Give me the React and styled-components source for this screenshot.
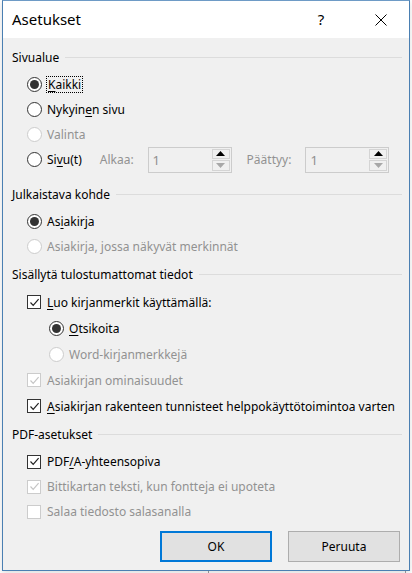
import styled, { createGlobalStyle } from "styled-components";

const GlobalStyle = createGlobalStyle`
  html, body {
    margin: 0;
    padding: 0;
    background: #ffffff;
  }
  body {
    font-family: "Noto Sans", "Open Sans", sans-serif;
    font-size: 12px;
    color: #000;
  }
`;

export default function App() {
  return (
    <>
      <GlobalStyle />
      <Page>
        <Dialog>
          <TitleBar>
            <Title>Asetukset</Title>
            <Help>?</Help>
            <Close>
              <svg width="12" height="12" viewBox="0 0 12 12">
                <path d="M0.5 0.5 L11.5 11.5 M11.5 0.5 L0.5 11.5" stroke="#000" strokeWidth="1" />
              </svg>
            </Close>
          </TitleBar>
          <Body>
            <Section>
              <Header>Sivualue</Header>
              <Row>
                <Radio checked />
                <Label focused>
                  <u>K</u>aikki
                </Label>
              </Row>
              <Row>
                <Radio />
                <Label>
                  Nykyin<u>e</u>n sivu
                </Label>
              </Row>
              <Row>
                <Radio disabled />
                <Label disabled>Valinta</Label>
              </Row>
              <Row>
                <Radio />
                <Label>
                  Si<u>v</u>u(t)
                </Label>
                <SpinGroup $offset={13}>
                  <Label disabled>Alkaa:</Label>
                  <Spin />
                </SpinGroup>
                <SpinGroup $offset={10}>
                  <Label disabled>Päättyy:</Label>
                  <Spin />
                </SpinGroup>
              </Row>
            </Section>

            <Section $top={12}>
              <Header>Julkaistava kohde</Header>
              <Row>
                <Radio checked />
                <Label>
                  As<u>i</u>akirja
                </Label>
              </Row>
              <Row>
                <Radio disabled />
                <Label disabled>Asiakirja, jossa näkyvät merkinnät</Label>
              </Row>
            </Section>

            <Section $top={5}>
              <Header>Sisällytä tulostumattomat tiedot</Header>
              <Row $h={26}>
                <Check checked />
                <Label>
                  <u>L</u>uo kirjanmerkit käyttämällä:
                </Label>
              </Row>
              <Row $h={26} $indent={22}>
                <Radio checked />
                <Label>
                  <u>O</u>tsikoita
                </Label>
              </Row>
              <Row $h={26} $indent={22}>
                <Radio disabled />
                <Label disabled>Word-kirjanmerkkejä</Label>
              </Row>
              <Row $h={26}>
                <Check checked disabled />
                <Label disabled>Asiakirjan ominaisuudet</Label>
              </Row>
              <Row $h={26}>
                <Check checked />
                <Label>
                  <u>A</u>siakirjan rakenteen tunnisteet helppokäyttötoimintoa varten
                </Label>
              </Row>
            </Section>

            <Section $top={5}>
              <Header>PDF-asetukset</Header>
              <Row>
                <Check checked />
                <Label>
                  PDF<u>/</u>A-yhteensopiva
                </Label>
              </Row>
              <Row>
                <Check checked disabled />
                <Label disabled>Bittikartan teksti, kun fontteja ei upoteta</Label>
              </Row>
              <Row>
                <Check disabled />
                <Label disabled>Salaa tiedosto salasanalla</Label>
              </Row>
            </Section>

            <Buttons>
              <Button $default>OK</Button>
              <Button>Peruuta</Button>
            </Buttons>
          </Body>
        </Dialog>
        <Behind>
          <BehindButton>Asetukset...</BehindButton>
        </Behind>
      </Page>
    </>
  );
}

function Radio({ checked, disabled }) {
  return (
    <RadioCircle $disabled={disabled}>
      {checked && <RadioDot />}
    </RadioCircle>
  );
}

function Check({ checked, disabled }) {
  return (
    <CheckBox $disabled={disabled}>
      {checked && (
        <svg width="11" height="11" viewBox="0 0 11 11">
          <path
            d="M1.5 5.5 L4.2 8.3 L9.6 2.2"
            fill="none"
            stroke={disabled ? "#c5c5c5" : "#222"}
            strokeWidth="1.2"
          />
        </svg>
      )}
    </CheckBox>
  );
}

function Spin() {
  return (
    <SpinBox>
      <SpinValue>1</SpinValue>
      <SpinButtons>
        <SpinBtn>
          <svg width="9" height="5" viewBox="0 0 9 5">
            <path d="M0 5 L4.5 0 L9 5 Z" fill="#000" />
          </svg>
        </SpinBtn>
        <SpinBtn>
          <svg width="9" height="5" viewBox="0 0 9 5">
            <path d="M0 0 L9 0 L4.5 5 Z" fill="#a8a8a8" />
          </svg>
        </SpinBtn>
      </SpinButtons>
    </SpinBox>
  );
}

const Page = styled.div`
  height: 573px;
  overflow: hidden;
  padding-left: 2px;
  box-sizing: border-box;
`;

const Dialog = styled.div`
  width: 408px;
  height: 571px;
  box-sizing: border-box;
  border: 1px solid #4a7fb2;
  border-top-color: #6e9bc6;
  background: #f0f0f0;
  display: flex;
  flex-direction: column;
  box-shadow: 0 2px 6px rgba(0, 0, 0, 0.15);
  position: relative;
  z-index: 1;
`;

const TitleBar = styled.div`
  height: 37px;
  background: #ffffff;
  display: flex;
  align-items: center;
  padding-left: 9px;
  flex-shrink: 0;
`;

const Title = styled.div`
  flex: 1;
  font-size: 15px;
  color: #000;
  padding-bottom: 1px;
`;

const Help = styled.div`
  width: 16px;
  font-size: 15px;
  margin-right: 46px;
  text-align: center;
  padding-bottom: 1px;
`;

const Close = styled.div`
  width: 12px;
  height: 12px;
  margin-right: 22px;
  display: flex;
`;

const Body = styled.div`
  flex: 1;
  display: flex;
  flex-direction: column;
  padding: 9px 7px 0 9px;
`;

const Section = styled.div`
  display: flex;
  flex-direction: column;
  margin-top: ${({ $top }) => $top || 0}px;
`;

const Header = styled.div`
  height: 20px;
  display: flex;
  align-items: center;
  gap: 6px;
  margin-bottom: 5px;
  white-space: nowrap;

  &::after {
    content: "";
    flex: 1;
    height: 1px;
    background: #dcdcdc;
    margin-top: 1px;
  }
`;

const Row = styled.div`
  height: ${({ $h }) => $h || 25}px;
  display: flex;
  align-items: center;
  padding-left: ${({ $indent }) => 15 + ($indent || 0)}px;
  white-space: nowrap;
`;

const Label = styled.span`
  margin-left: 5px;
  color: ${({ disabled }) => (disabled ? "#929292" : "#000")};
  outline: ${({ focused }) => (focused ? "1px dotted #000" : "none")};
  padding: ${({ focused }) => (focused ? "0 1px" : "0")};
  line-height: 15px;

  u {
    text-decoration-thickness: 1px;
    text-underline-offset: 2px;
  }
`;

const RadioCircle = styled.span`
  width: 15px;
  height: 15px;
  box-sizing: border-box;
  border-radius: 50%;
  border: 1px solid ${({ $disabled }) => ($disabled ? "#cccccc" : "#333333")};
  background: #ffffff;
  display: flex;
  align-items: center;
  justify-content: center;
  flex-shrink: 0;
`;

const RadioDot = styled.span`
  width: 9px;
  height: 9px;
  border-radius: 50%;
  background: #333333;
`;

const CheckBox = styled.span`
  width: 14px;
  height: 14px;
  box-sizing: border-box;
  border: 1px solid ${({ $disabled }) => ($disabled ? "#cccccc" : "#333333")};
  background: #ffffff;
  display: flex;
  align-items: center;
  justify-content: center;
  flex-shrink: 0;
  margin-right: 1px;
`;

const SpinGroup = styled.div`
  display: flex;
  align-items: center;
  margin-left: ${({ $offset }) => $offset}px;
  gap: 14px;
`;

const SpinBox = styled.div`
  width: 84px;
  height: 26px;
  box-sizing: border-box;
  border: 1px solid #cccccc;
  background: #f0f0f0;
  display: flex;
  align-items: stretch;
`;

const SpinValue = styled.div`
  flex: 1;
  color: #8f8f8f;
  padding-left: 4px;
  display: flex;
  align-items: center;
  font-size: 13px;
`;

const SpinButtons = styled.div`
  width: 18px;
  display: flex;
  flex-direction: column;
  gap: 1px;
  padding: 1px 1px 1px 0;
`;

const SpinBtn = styled.div`
  flex: 1;
  border: 1px solid #d4d4d4;
  background: #f0f0f0;
  display: flex;
  align-items: center;
  justify-content: center;
`;

const Buttons = styled.div`
  display: flex;
  justify-content: flex-end;
  gap: 16px;
  margin-top: 7px;
  padding-right: 2px;
`;

const Button = styled.button`
  width: 112px;
  height: 31px;
  box-sizing: border-box;
  background: #e1e1e1;
  border: ${({ $default }) => ($default ? "2px solid #0078d7" : "1px solid #adadad")};
  font-family: "Noto Sans", "Open Sans", sans-serif;
  font-size: 12px;
  color: #000;
  padding: 0;
`;

const Behind = styled.div`
  display: flex;
  justify-content: flex-end;
  padding-right: 6px;
`;

const BehindButton = styled.div`
  width: 196px;
  height: 24px;
  border: 1px solid #a0a0a0;
  text-align: center;
  font-size: 14px;
  margin-top: -2px;
`;
